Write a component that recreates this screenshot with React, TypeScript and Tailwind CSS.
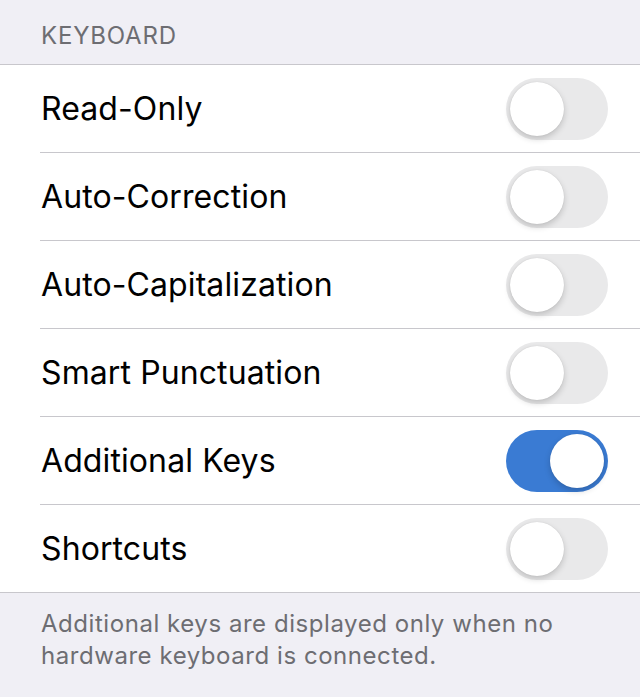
import React from "react";

const rows: { label: string; on: boolean }[] = [
  { label: "Read-Only", on: false },
  { label: "Auto-Correction", on: false },
  { label: "Auto-Capitalization", on: false },
  { label: "Smart Punctuation", on: false },
  { label: "Additional Keys", on: true },
  { label: "Shortcuts", on: false },
];

function Toggle({ on }: { on: boolean }) {
  return (
    <div
      className={
        on
          ? "relative h-[62px] w-[102px] rounded-full bg-[#3a7bd3]"
          : "relative h-[62px] w-[102px] rounded-full bg-[#e9e9ea]"
      }
    >
      <div
        className={
          on
            ? "absolute top-[4px] left-[44px] h-[54px] w-[54px] rounded-full bg-white shadow-[0_3px_6px_rgba(0,0,0,0.18),0_0_1px_rgba(0,0,0,0.15)]"
            : "absolute top-[4px] left-[4px] h-[54px] w-[54px] rounded-full bg-white shadow-[0_3px_6px_rgba(0,0,0,0.18),0_0_1px_rgba(0,0,0,0.15)]"
        }
      />
    </div>
  );
}

export default function App() {
  return (
    <div
      className="h-[697px] w-[640px] bg-[#f0eff5]"
      style={{ fontFamily: "Inter, 'Noto Sans', sans-serif" }}
    >
      <div className="h-[64px] px-[41px] pt-[20px] text-[24px] leading-[32px] text-[#6d6d72] tracking-[0.8px]">
        KEYBOARD
      </div>
      <div className="border-y border-[#c8c7cc] bg-white">
        {rows.map((r, i) => (
          <div key={r.label} className="pl-[40px]">
            <div
              className={
                i < rows.length - 1
                  ? "flex h-[88px] items-center justify-between border-b border-[#c8c7cc] pr-[32px]"
                  : "flex h-[87px] items-center justify-between pr-[32px]"
              }
            >
              <span className="pl-[1px] text-[32px] leading-[40px] tracking-[0.1px] text-black">{r.label}</span>
              <Toggle on={r.on} />
            </div>
          </div>
        ))}
      </div>
      <div className="px-[41px] pt-[15px] text-[24px] leading-[32px] tracking-[0.55px] text-[#6d6d72]">
        Additional keys are displayed only when no hardware keyboard is connected.
      </div>
    </div>
  );
}
